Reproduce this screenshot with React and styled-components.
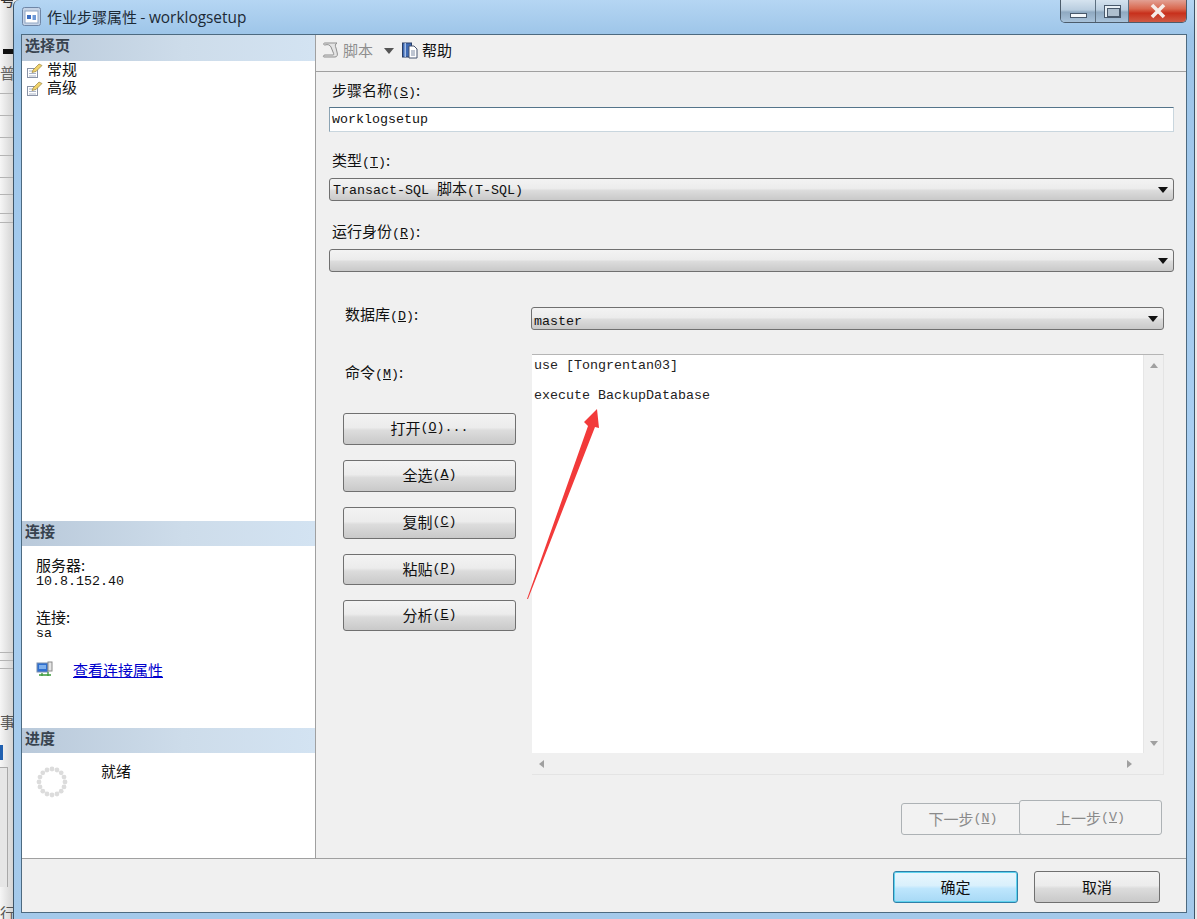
import styled, { createGlobalStyle } from "styled-components";

const Global = createGlobalStyle`
  html, body { margin: 0; padding: 0; background: #e9e9e9; }
  * { box-sizing: border-box; }
`;

const cjk = `"Noto Sans CJK SC", "Liberation Sans", sans-serif`;
const steel = "linear-gradient(#f3f3f3 0%, #ececec 45%, #dcdcdc 55%, #c9c9c9 100%)";

const Desktop = styled.div`
  width: 1197px;
  height: 919px;
  display: flex;
  overflow: hidden;
  font: 15px/16px ${cjk};
  color: #111;
  background: #e9e9e9;
`;

const BehindStrip = styled.div`
  width: 13px;
  flex: none;
  display: flex;
  flex-direction: column;
  overflow: hidden;
  color: #555;
  background: linear-gradient(90deg, #f6f6f6, #d4d4d4);
`;

const StripGlyph = styled.div`
  height: 16px;
  flex: none;
  margin-top: ${(p) => p.$top}px;
  white-space: nowrap;
  color: ${(p) => p.$color || "#666"};
`;

const StripBar = styled.div`
  height: ${(p) => p.$h || 1}px;
  width: ${(p) => p.$w || "100%"};
  margin-left: ${(p) => p.$left || 0}px;
  margin-top: ${(p) => p.$top}px;
  flex: none;
  background: ${(p) => p.$color || "#b4b4b4"};
`;

const StripBox = styled.div`
  width: 8px;
  height: 120px;
  flex: none;
  margin-top: 7px;
  background: #e6e6e6;
  border-top: 1px solid #a8a8a8;
  border-right: 1px solid #a8a8a8;
`;

const Window = styled.div`
  width: 1182px;
  height: 919px;
  flex: none;
  display: flex;
  flex-direction: column;
  padding: 0 7px 6px 7px;
  border-left: 1px solid #3e5568;
  border-right: 1px solid #3e5568;
  border-top-left-radius: 6px;
  background: linear-gradient(#b5d6f3 0%, #9cc4e8 4%, #a9cff2 50%, #a4c9ea 100%);
`;

const TitleBar = styled.div`
  height: 34px;
  flex: none;
  display: flex;
  align-items: flex-start;
`;

const TitleIcon = styled.svg`
  width: 19px;
  height: 19px;
  margin: 7px 6px 0 1px;
  flex: none;
`;

const TitleText = styled.div`
  margin-top: 8px;
  font-size: 15px;
  line-height: 18px;
  color: #1c2a36;
`;

const TitleLatin = styled.span`
  font-family: "Open Sans", "Liberation Sans", sans-serif;
  font-size: 15.4px;
`;

const Controls = styled.div`
  margin-left: auto;
  display: flex;
  height: 23px;
  border: 1px solid #4c5c6b;
  border-top: none;
  border-radius: 0 0 5px 5px;
  overflow: hidden;
`;

const ControlButton = styled.div`
  width: ${(p) => p.$w}px;
  display: flex;
  align-items: center;
  justify-content: center;
  border-left: ${(p) => (p.$first ? "none" : "1px solid #5c6f80")};
  background: ${(p) =>
    p.$close
      ? "linear-gradient(#e2a093 0%, #d9684f 40%, #c8301c 60%, #cf5a44 100%)"
      : "linear-gradient(#d5e3ef 0%, #b9cddf 45%, #8fa9c1 55%, #a9c3da 100%)"};
`;

const MinGlyph = styled.div`
  width: 17px;
  height: 5px;
  margin-top: 9px;
  background: #f4f8fb;
  border: 1px solid #48586a;
`;

const MaxGlyph = styled.div`
  width: 17px;
  height: 13px;
  border: 1px solid #48586a;
  background: #e8f0f6;
  padding: 2px;

  &::after {
    content: "";
    display: block;
    width: 100%;
    height: 100%;
    border: 1px solid #48586a;
    background: #aebfce;
  }
`;

const Client = styled.div`
  flex: 1;
  min-height: 0;
  display: flex;
  flex-direction: column;
  border: 1px solid #4d6a80;
  background: #f0f0f0;
`;

const Panes = styled.div`
  flex: 1;
  min-height: 0;
  display: flex;
`;

const LeftPane = styled.div`
  width: 294px;
  flex: none;
  display: flex;
  flex-direction: column;
  background: #fff;
  border-right: 1px solid #a0a0a0;
`;

const PaneHeader = styled.div`
  height: ${(p) => p.$h || 25}px;
  flex: none;
  padding: 1px 0 0 3px;
  font-weight: 700;
  font-size: 15px;
  line-height: 18px;
  color: #38434f;
  background: linear-gradient(90deg, #b9c9da 0%, #cddcea 55%, #d3e3f2 100%);
`;

const PageList = styled.div`
  height: 460px;
  flex: none;
`;

const PageRow = styled.div`
  height: 18px;
  display: flex;
  align-items: flex-start;
  padding-left: 3px;
  gap: 4px;
`;

const SmallIcon = styled.svg`
  width: ${(p) => p.$size || 18}px;
  height: ${(p) => p.$size || 18}px;
  margin-top: ${(p) => p.$top || 0}px;
  flex: none;
`;

const ConnectionBody = styled.div`
  height: 182px;
  flex: none;
  padding: 11px 0 0 14px;
`;

const InfoLabel = styled.div`
  height: 16px;
  margin-top: ${(p) => p.$top || 0}px;
`;

const InfoValue = styled.div`
  height: 16px;
  line-height: 12px;
`;

const LinkRow = styled.div`
  display: flex;
  align-items: center;
  margin-top: 20px;
  height: 18px;
  gap: 19px;
`;

const PropLink = styled.a`
  color: #0000cc;
  text-decoration: underline;
`;

const ProgressBody = styled.div`
  flex: 1;
  display: flex;
  padding: 11px 0 0 14px;
`;

const ReadyText = styled.div`
  margin: -1px 0 0 33px;
`;

const RightPane = styled.div`
  flex: 1;
  min-width: 0;
  display: flex;
  flex-direction: column;
`;

const Toolbar = styled.div`
  height: 37px;
  flex: none;
  display: flex;
  align-items: center;
  padding: 0 0 7px 6px;
  border-bottom: 1px solid #a0a0a0;
`;

const ToolItem = styled.div`
  display: flex;
  align-items: center;
  gap: 3px;
  color: ${(p) => (p.$disabled ? "#8e8e8e" : "#111")};
`;

const ToolCaret = styled.div`
  width: 0;
  height: 0;
  margin: 2px 7px 0 11px;
  border-left: 5px solid transparent;
  border-right: 5px solid transparent;
  border-top: 6px solid #555;
`;

const Form = styled.div`
  position: relative;
  flex: 1;
  display: flex;
  flex-direction: column;
  padding: 0 12px 0 13px;
`;

const FieldLabel = styled.div`
  height: 18px;
  line-height: 18px;
  padding-left: 3px;
  margin-top: ${(p) => p.$top}px;
`;

const Latin = styled.span`
  font-family: "Liberation Mono", monospace;
  font-size: 13.33px;
`;

const TextInput = styled.div`
  height: 25px;
  margin-top: 8px;
  display: flex;
  align-items: center;
  padding-left: 2px;
  background: #fff;
  border: 1px solid #c9d6de;
  border-top-color: #54748a;
  border-left-color: #8ba3b3;
`;

const Select = styled.div`
  height: 23px;
  margin-top: ${(p) => p.$top}px;
  display: flex;
  align-items: center;
  justify-content: space-between;
  padding: 0 5px 0 ${(p) => p.$pad || 3}px;
  border: 1px solid #707070;
  border-radius: 3px;
  background: ${steel};
  flex: ${(p) => (p.$grow ? 1 : "none")};
`;

const SelectValue = styled.span`
  margin-top: ${(p) => p.$drop || 0}px;
`;

const Caret = styled.div`
  width: 0;
  height: 0;
  border-left: 5px solid transparent;
  border-right: 5px solid transparent;
  border-top: 6px solid #111;
`;

const DbRow = styled.div`
  display: flex;
  margin: 35px 10px 0 0;
`;

const SideColumn = styled.div`
  width: 202px;
  flex: none;
  padding-left: 16px;
`;

const SideLabel = styled.div`
  height: 18px;
  line-height: 18px;
  margin-top: ${(p) => p.$top}px;
`;

const CommandRow = styled.div`
  display: flex;
  margin: 24px 10px 0 0;
`;

const ButtonStack = styled.div`
  display: flex;
  flex-direction: column;
  gap: 15px;
  margin: 32px 0 0 -2px;
`;

const SideButton = styled.div`
  width: 173px;
  height: ${(p) => p.$h || 32}px;
  padding-bottom: 2px;
  display: flex;
  align-items: center;
  justify-content: center;
  border: 1px solid #707070;
  border-radius: 3px;
  background: ${steel};
`;

const Editor = styled.div`
  width: 632px;
  height: 421px;
  margin-left: 1px;
  display: grid;
  grid-template-columns: 1fr 20px;
  grid-template-rows: 1fr 21px;
  border-top: 1px solid #b5b5b5;
  border-right: 1px solid #e4e4e4;
  border-bottom: 1px solid #e4e4e4;
`;

const EditorText = styled.div`
  padding: 3px 0 0 2px;
  background: #fff;
`;

const EditorLine = styled.div`
  height: 15px;
  line-height: 15px;
  white-space: pre;
  font-family: "Liberation Mono", monospace;
  font-size: 13.33px;
  color: #222;
`;

const VScroll = styled.div`
  display: flex;
  flex-direction: column;
  justify-content: space-between;
  align-items: center;
  padding: 8px 0 7px;
  background: #f0f0f0;
  border-left: 1px solid #e6e6e6;
`;

const HScroll = styled.div`
  grid-column: 1;
  display: flex;
  justify-content: space-between;
  align-items: center;
  padding: 0 11px 0 7px;
  background: #f0f0f0;
`;

const ArrowMark = styled.div`
  width: 0;
  height: 0;
  ${(p) => {
    if (p.$dir === "up") return "border-left: 4px solid transparent; border-right: 4px solid transparent; border-bottom: 5px solid #a0a0a0;";
    if (p.$dir === "down") return "border-left: 4px solid transparent; border-right: 4px solid transparent; border-top: 5px solid #a0a0a0;";
    if (p.$dir === "left") return "border-top: 4px solid transparent; border-bottom: 4px solid transparent; border-right: 5px solid #a0a0a0;";
    return "border-top: 4px solid transparent; border-bottom: 4px solid transparent; border-left: 5px solid #a0a0a0;";
  }}
`;

const Corner = styled.div`
  background: #f0f0f0;
`;

const Annotation = styled.svg`
  position: absolute;
  left: 205px;
  top: 330px;
  width: 80px;
  height: 200px;
  pointer-events: none;
`;

const StepRow = styled.div`
  display: flex;
  justify-content: flex-end;
  align-items: flex-end;
  margin: 25px 12px 0 0;
`;

const StepButton = styled.div`
  width: ${(p) => p.$w}px;
  height: ${(p) => p.$h}px;
  margin-left: ${(p) => p.$overlap || 0}px;
  display: flex;
  align-items: center;
  justify-content: center;
  color: #8a8a8a;
  background: #f2f2f2;
  border: 1px solid #adb2b5;
  border-radius: 3px;
`;

const Footer = styled.div`
  height: 54px;
  flex: none;
  display: flex;
  justify-content: flex-end;
  gap: 16px;
  padding: 12px 26px 0 0;
  border-top: 1px solid #a0a0a0;
`;

const DialogButton = styled.div`
  width: ${(p) => (p.$primary ? 125 : 126)}px;
  height: 32px;
  display: flex;
  align-items: center;
  justify-content: center;
  border-radius: 3px;
  border: 1px solid ${(p) => (p.$primary ? "#2f7fa8" : "#707070")};
  background: ${(p) => (p.$primary ? "linear-gradient(#eaf6fd 0%, #d9f0fc 45%, #bee6fd 55%, #a7d9f5 100%)" : steel)};
  box-shadow: ${(p) => (p.$primary ? "inset 0 0 0 1px #5fd3ee" : "none")};
`;

const Mnemonic = ({ k }) => (
  <Latin>
    (<u>{k}</u>)
  </Latin>
);

const PageIcon = () => (
  <SmallIcon viewBox="0 0 18 18">
    <rect x="2.5" y="7.5" width="10" height="9" fill="#fff" stroke="#8a93a6" />
    <path d="M4 10h7M4 12.5h7M4 15h7" stroke="#a9b3c6" />
    <path d="M8 9l6-6 3 1.5-6 6-4 1z" fill="#f1d36b" stroke="#9a8440" strokeWidth=".7" />
  </SmallIcon>
);

const ConnectionIcon = () => (
  <SmallIcon viewBox="0 0 18 18">
    <rect x="1" y="2" width="11" height="9" fill="#2f6fd0" stroke="#7b8fae" />
    <rect x="3" y="4" width="7" height="4" fill="#7fb0ec" />
    <rect x="12" y="1" width="4" height="9" fill="#e6e6e6" stroke="#8a8a8a" />
    <path d="M3 14h12M6 12v3M12 11v4" stroke="#3a9a3a" strokeWidth="1.3" fill="none" />
  </SmallIcon>
);

const ScriptIcon = () => (
  <SmallIcon viewBox="0 0 18 18">
    <path d="M3 2h12c-2 1-2 3-1 5l1 4c1 3 0 5-2 5H2c-1 0-1-2 1-2h8c1 0 1-1 0-3L9 6C8 4 6 3 3 4c-2 0-2-2 0-2z" fill="#e4e4e4" stroke="#8f8f8f" />
  </SmallIcon>
);

const HelpIcon = () => (
  <SmallIcon viewBox="0 0 18 18">
    <rect x="1.5" y="2" width="9" height="14" fill="#3f6bb5" stroke="#2a3f66" />
    <rect x="3.5" y="2" width="1.5" height="14" fill="#a8c0e6" />
    <path d="M8 5h5l3 3v9H8z" fill="#fff" stroke="#45526e" />
    <path d="M10 10h4M10 12h4M10 14h4" stroke="#7f8ca5" />
  </SmallIcon>
);

const Spinner = () => {
  const dots = Array.from({ length: 16 }, (_, i) => {
    const a = (i / 16) * Math.PI * 2;
    return <circle key={i} cx={16 + 13 * Math.cos(a)} cy={16 + 13 * Math.sin(a)} r="2.4" fill="#dcdcdc" />;
  });
  return (
    <SmallIcon viewBox="0 0 32 32" $size={32} $top={2}>
      {dots}
    </SmallIcon>
  );
};

export default function App() {
  return (
    <Desktop>
      <Global />
      <BehindStrip>
        <StripGlyph $top={-8} $color="#333">号</StripGlyph>
        <StripBar $top={41} $h={5} $w="10px" $left={3} $color="#111" />
        <StripGlyph $top={11}>普</StripGlyph>
        <StripBar $top={12} />
        <StripBar $top={21} />
        <StripBar $top={21} />
        <StripBar $top={17} />
        <StripBar $top={21} />
        <StripBar $top={16} />
        <StripBar $top={18} />
        <StripBar $top={8} />
        <StripBar $top={429} />
        <StripBar $top={7} />
        <StripBar $top={7} />
        <StripGlyph $top={45} $color="#555">事</StripGlyph>
        <StripBar $top={15} $h={15} $w="3px" $color="#2060b0" />
        <StripBox />
        <StripGlyph $top={18} $color="#555">行</StripGlyph>
      </BehindStrip>
      <Window>
        <TitleBar>
          <TitleIcon viewBox="0 0 19 19">
            <rect x=".5" y=".5" width="18" height="18" rx="2" fill="#c5d3e6" stroke="#6f86a6" />
            <rect x="3" y="4" width="13" height="12" fill="#fff" stroke="#8fa6c4" />
            <rect x="5" y="8" width="4" height="4" fill="#3d6fc2" />
            <rect x="10.5" y="8" width="3.5" height="5" fill="#6f9ad8" />
          </TitleIcon>
          <TitleText>
            作业步骤属性 - <TitleLatin>worklogsetup</TitleLatin>
          </TitleText>
          <Controls>
            <ControlButton $w={34} $first>
              <MinGlyph />
            </ControlButton>
            <ControlButton $w={33}>
              <MaxGlyph />
            </ControlButton>
            <ControlButton $w={58} $close>
              <svg width="18" height="16" viewBox="0 0 18 16">
                <path d="M3 2l12 12M15 2L3 14" stroke="#f6ece8" strokeWidth="3.6" />
              </svg>
            </ControlButton>
          </Controls>
        </TitleBar>
        <Client>
          <Panes>
            <LeftPane>
              <PaneHeader $h={26}>选择页</PaneHeader>
              <PageList>
                <PageRow>
                  <PageIcon />
                  常规
                </PageRow>
                <PageRow>
                  <PageIcon />
                  高级
                </PageRow>
              </PageList>
              <PaneHeader>连接</PaneHeader>
              <ConnectionBody>
                <InfoLabel>服务器:</InfoLabel>
                <InfoValue>
                  <Latin>10.8.152.40</Latin>
                </InfoValue>
                <InfoLabel $top={20}>连接:</InfoLabel>
                <InfoValue>
                  <Latin>sa</Latin>
                </InfoValue>
                <LinkRow>
                  <ConnectionIcon />
                  <PropLink>查看连接属性</PropLink>
                </LinkRow>
              </ConnectionBody>
              <PaneHeader>进度</PaneHeader>
              <ProgressBody>
                <Spinner />
                <ReadyText>就绪</ReadyText>
              </ProgressBody>
            </LeftPane>
            <RightPane>
              <Toolbar>
                <ToolItem $disabled>
                  <ScriptIcon />
                  脚本
                </ToolItem>
                <ToolCaret />
                <ToolItem>
                  <HelpIcon />
                  帮助
                </ToolItem>
              </Toolbar>
              <Form>
                <FieldLabel $top={9}>
                  步骤名称<Mnemonic k="S" />:
                </FieldLabel>
                <TextInput>
                  <Latin>worklogsetup</Latin>
                </TextInput>
                <FieldLabel $top={19}>
                  类型<Mnemonic k="T" />:
                </FieldLabel>
                <Select $top={9}>
                  <span>
                    <Latin>Transact-SQL </Latin>脚本<Latin>(T-SQL)</Latin>
                  </span>
                  <Caret />
                </Select>
                <FieldLabel $top={21}>
                  运行身份<Mnemonic k="R" />:
                </FieldLabel>
                <Select $top={9}>
                  <span />
                  <Caret />
                </Select>
                <DbRow>
                  <SideColumn>
                    <SideLabel $top={-2}>
                      数据库<Mnemonic k="D" />:
                    </SideLabel>
                  </SideColumn>
                  <Select $top={0} $grow $pad={2}>
                    <SelectValue $drop={3}>
                      <Latin>master</Latin>
                    </SelectValue>
                    <Caret />
                  </Select>
                </DbRow>
                <CommandRow>
                  <SideColumn>
                    <SideLabel $top={9}>
                      命令<Mnemonic k="M" />:
                    </SideLabel>
                    <ButtonStack>
                      <SideButton>
                        打开<Mnemonic k="O" />
                        <Latin>...</Latin>
                      </SideButton>
                      <SideButton>
                        全选<Mnemonic k="A" />
                      </SideButton>
                      <SideButton>
                        复制<Mnemonic k="C" />
                      </SideButton>
                      <SideButton $h={31}>
                        粘贴<Mnemonic k="P" />
                      </SideButton>
                      <SideButton $h={31}>
                        分析<Mnemonic k="E" />
                      </SideButton>
                    </ButtonStack>
                  </SideColumn>
                  <Editor>
                    <EditorText>
                      <EditorLine>use [Tongrentan03]</EditorLine>
                      <EditorLine> </EditorLine>
                      <EditorLine>execute BackupDatabase</EditorLine>
                    </EditorText>
                    <VScroll>
                      <ArrowMark $dir="up" />
                      <ArrowMark $dir="down" />
                    </VScroll>
                    <HScroll>
                      <ArrowMark $dir="left" />
                      <ArrowMark $dir="right" />
                    </HScroll>
                    <Corner />
                  </Editor>
                </CommandRow>
                <StepRow>
                  <StepButton $w={124} $h={32}>
                    下一步<Mnemonic k="N" />
                  </StepButton>
                  <StepButton $w={143} $h={35} $overlap={-6}>
                    上一步<Mnemonic k="V" />
                  </StepButton>
                </StepRow>
                <Annotation viewBox="0 0 80 200">
                  <path d="M6 197 L67 24 L63 20 L76 7 L78 26 L74 25 L7 197 Z" fill="#f23a3a" />
                </Annotation>
              </Form>
            </RightPane>
          </Panes>
          <Footer>
            <DialogButton $primary>确定</DialogButton>
            <DialogButton>取消</DialogButton>
          </Footer>
        </Client>
      </Window>
    </Desktop>
  );
}
